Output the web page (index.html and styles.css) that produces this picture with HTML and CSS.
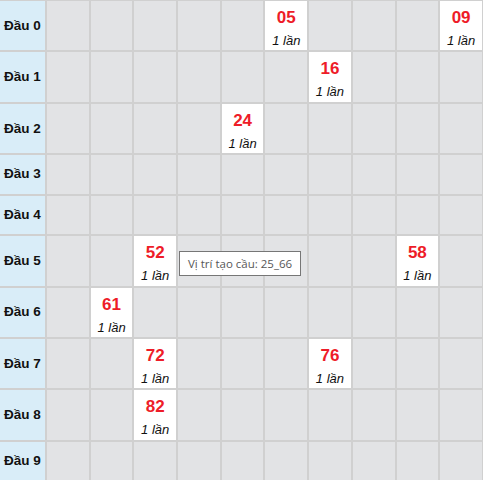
FILE: index.html
```html
<!DOCTYPE html>
<html lang="vi">
<head>
    <meta charset="UTF-8">
    <meta name="viewport" content="width=device-width, initial-scale=1.0">
    <title>Cầu lô tô</title>
    <link rel="stylesheet" href="styles.css">
</head>
<body>

    <div class="board">
        <table class="cau-table">
            <colgroup>
                <col class="col-head">
                <col span="10">
            </colgroup>
            <tr>
                <th>Đầu 0</th>
                <td></td><td></td><td></td><td></td><td></td>
                <td class="hit"><b>05</b><i>1 lần</i></td>
                <td></td><td></td><td></td>
                <td class="hit"><b>09</b><i>1 lần</i></td>
            </tr>
            <tr>
                <th>Đầu 1</th>
                <td></td><td></td><td></td><td></td><td></td><td></td>
                <td class="hit"><b>16</b><i>1 lần</i></td>
                <td></td><td></td><td></td>
            </tr>
            <tr>
                <th>Đầu 2</th>
                <td></td><td></td><td></td><td></td>
                <td class="hit"><b>24</b><i>1 lần</i></td>
                <td></td><td></td><td></td><td></td><td></td>
            </tr>
            <tr>
                <th>Đầu 3</th>
                <td></td><td></td><td></td><td></td><td></td><td></td><td></td><td></td><td></td><td></td>
            </tr>
            <tr>
                <th>Đầu 4</th>
                <td></td><td></td><td></td><td></td><td></td><td></td><td></td><td></td><td></td><td></td>
            </tr>
            <tr>
                <th>Đầu 5</th>
                <td></td><td></td>
                <td class="hit"><b>52</b><i>1 lần</i></td>
                <td></td><td></td><td></td><td></td><td></td>
                <td class="hit"><b>58</b><i>1 lần</i></td>
                <td></td>
            </tr>
            <tr>
                <th>Đầu 6</th>
                <td></td>
                <td class="hit"><b>61</b><i>1 lần</i></td>
                <td></td><td></td><td></td><td></td><td></td><td></td><td></td><td></td>
            </tr>
            <tr>
                <th>Đầu 7</th>
                <td></td><td></td>
                <td class="hit"><b>72</b><i>1 lần</i></td>
                <td></td><td></td><td></td>
                <td class="hit"><b>76</b><i>1 lần</i></td>
                <td></td><td></td><td></td>
            </tr>
            <tr>
                <th>Đầu 8</th>
                <td></td><td></td>
                <td class="hit"><b>82</b><i>1 lần</i></td>
                <td></td><td></td><td></td><td></td><td></td><td></td><td></td>
            </tr>
            <tr>
                <th>Đầu 9</th>
                <td></td><td></td><td></td><td></td><td></td><td></td><td></td><td></td><td></td><td></td>
            </tr>
        </table>

        <!-- tooltip khi rê chuột -->
        <div class="tooltip">Vị trí tạo cầu: 25_66</div>
    </div>

</body>
</html>
```

FILE: styles.css
```css
body {
    margin: 0;
    padding: 0;
    font-family: "Liberation Sans", Arial, sans-serif;
    background-color: #fff;
    overflow: hidden;
}

.board {
    position: relative;
}

.cau-table {
    width: 484px;
    margin-top: -1px;
    table-layout: fixed;
    border-collapse: collapse;
}

.cau-table .col-head {
    width: 46px;
}

.cau-table th,
.cau-table td {
    border: 2px solid #d0d0d0;
    height: 27.5px;
    padding: 5px 0 6px;
}

.cau-table th {
    background-color: #d9edf8;
    color: #111;
    font-size: 13.5px;
    font-weight: bold;
    text-align: left;
    padding-left: 4px;
    border-left: 0;
}

.cau-table td {
    background-color: #e2e3e5;
    text-align: center;
}

.cau-table td.hit {
    background-color: #fff;
    padding: 6px 0 0;
}

.hit b {
    display: block;
    color: #ee1c28;
    font-size: 17px;
    line-height: 21px;
}

.hit i {
    display: block;
    margin-top: 3px;
    color: #111;
    font-size: 13px;
    line-height: 19.4px;
}

/* tooltip */
.tooltip {
    position: absolute;
    top: 252px;
    left: 179px;
    padding: 4px 8px;
    background-color: #fff;
    border: 1px solid #767676;
    color: #575757;
    font-family: "Open Sans", "Noto Sans", sans-serif;
    font-size: 11.5px;
    line-height: 15px;
    white-space: nowrap;
}
```
